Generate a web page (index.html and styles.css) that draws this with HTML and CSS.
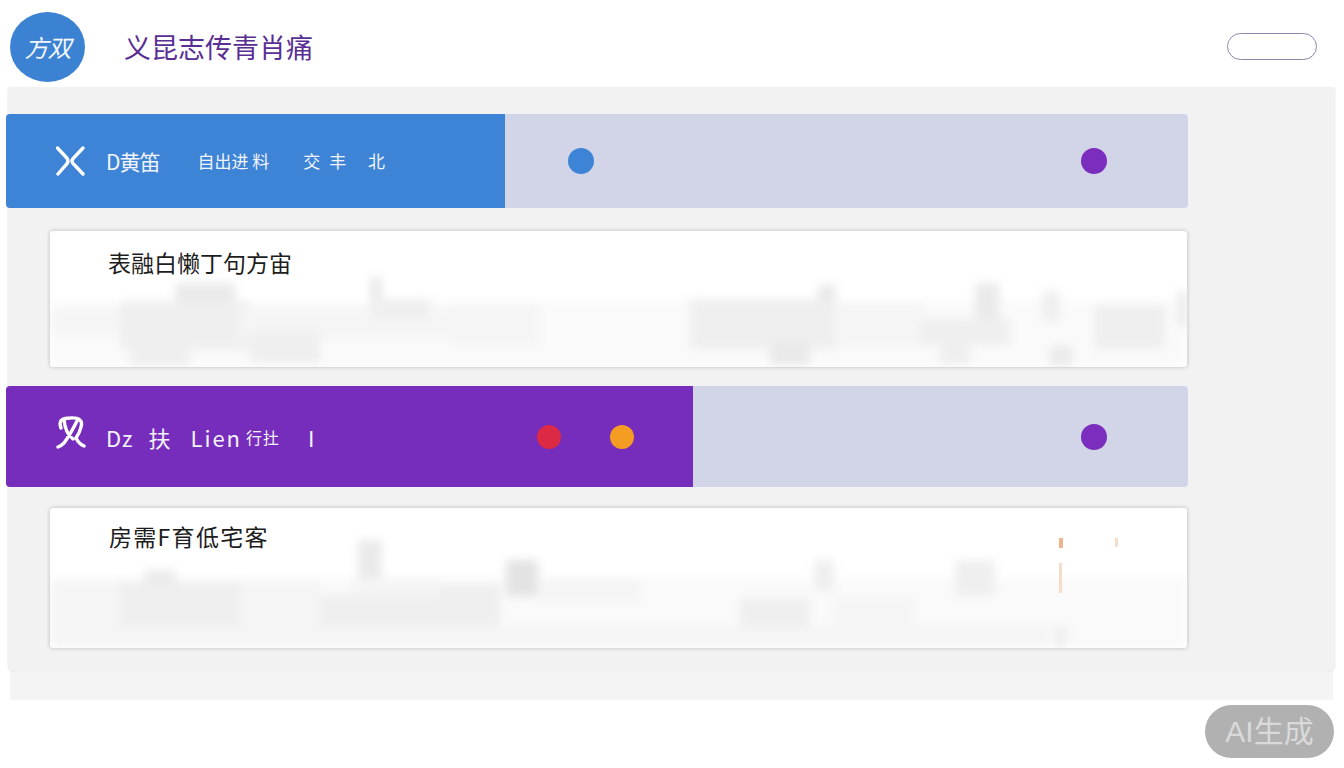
FILE: index.html
```html
<!DOCTYPE html>
<html lang="zh">
<head>
<meta charset="utf-8">
<title>义昆志传青肖痛</title>
<link rel="stylesheet" href="styles.css">
</head>
<body>
<header class="top">
  <div class="logo">方双</div>
  <h1 class="title">义昆志传青肖痛</h1>
  <button class="pill" type="button"></button>
</header>
<main class="panel">
  <section class="bar bar-blue">
    <div class="fill fill-blue">
      <svg class="bar-icon" viewBox="0 0 30 34"><path d="M1.5 4 L9 12 Q12 15 12 17 Q12 19 9 22 L2 30 M27 4 L19.5 12 Q16 15 16 17 Q16 19 19.5 22 L27 30"/></svg>
      <span class="bar-text"><span class="seg-a">D黄笛</span><span class="seg-b">自出进 料</span><span class="seg-c">交丰 北</span></span>
    </div>
    <div class="track">
      <span class="dot dot-blue"></span>
      <span class="dot dot-purple dot-end"></span>
    </div>
  </section>
  <article class="card card-one">
    <svg class="sky" viewBox="0 0 1137 136" preserveAspectRatio="none">
      <g class="blur">
        <rect class="s0" x="0" y="70" width="1137" height="66"/>
        <rect class="s1" x="0" y="78" width="70" height="26"/>
        <rect class="s2" x="70" y="70" width="130" height="48"/>
        <rect class="s2" x="80" y="118" width="60" height="18"/>
        <rect class="s3" x="125" y="52" width="60" height="18"/>
        <rect class="s1" x="190" y="78" width="210" height="30"/>
        <rect class="s2" x="200" y="100" width="70" height="32"/>
        <rect class="s3" x="320" y="46" width="12" height="34"/>
        <rect class="s2" x="320" y="68" width="60" height="20"/>
        <rect class="s1" x="400" y="74" width="90" height="40"/>
        <rect class="s2" x="640" y="68" width="145" height="50"/>
        <rect class="s3" x="720" y="110" width="40" height="24"/>
        <rect class="s3" x="768" y="54" width="18" height="18"/>
        <rect class="s1" x="785" y="72" width="90" height="44"/>
        <rect class="s3" x="925" y="52" width="24" height="36"/>
        <rect class="s2" x="992" y="60" width="18" height="30"/>
        <rect class="s2" x="870" y="88" width="90" height="26"/>
        <rect class="s2" x="890" y="110" width="30" height="24"/>
        <rect class="s2" x="1045" y="74" width="70" height="44"/>
        <rect class="s3" x="1000" y="115" width="22" height="20"/>
        <rect class="s3" x="1128" y="60" width="9" height="36"/>
      </g>
    </svg>
    <p class="card-text">表融白懒丁句方宙</p>
  </article>
  <section class="bar bar-purple">
    <div class="fill fill-purple">
      <svg class="bar-icon" viewBox="0 0 30 34"><path d="M5 13 Q1 3 14 3 Q28 2 25 12 Q24 17 20 23 Q23 29 28 31 M8 4 Q9 18 17 24 M21 6 Q14 20 8 28 Q5 31 2 32"/></svg>
      <span class="bar-text bar-text-wide"><span class="seg-dz">Dz</span><span class="seg-fu">扶</span><span class="seg-li">Lien</span><span class="seg-xi">行扗</span><span class="seg-i">I</span></span>
      <span class="dot dot-red"></span>
      <span class="dot dot-orange"></span>
    </div>
    <div class="track">
      <span class="dot dot-purple dot-end"></span>
    </div>
  </section>
  <article class="card card-two">
    <svg class="sky" viewBox="0 0 1137 140" preserveAspectRatio="none">
      <g class="blur">
        <rect class="s0" x="0" y="70" width="1137" height="70"/>
        <rect class="s1" x="0" y="72" width="270" height="46"/>
        <rect class="s2" x="70" y="74" width="120" height="44"/>
        <rect class="s3" x="95" y="62" width="30" height="14"/>
        <rect class="s2" x="270" y="86" width="120" height="32"/>
        <rect class="s3" x="308" y="32" width="24" height="42"/>
        <rect class="s1" x="300" y="70" width="90" height="18"/>
        <rect class="s4" x="456" y="52" width="32" height="36"/>
        <rect class="s2" x="390" y="76" width="60" height="50"/>
        <rect class="s1" x="490" y="70" width="100" height="24"/>
        <rect class="s2" x="764" y="52" width="20" height="30"/>
        <rect class="s2" x="905" y="52" width="40" height="36"/>
        <rect class="s1" x="785" y="90" width="80" height="30"/>
        <rect class="s1" x="0" y="118" width="1000" height="22"/>
        <rect class="s2" x="690" y="90" width="70" height="30"/>
        <rect class="s2" x="1005" y="118" width="12" height="22"/>
      </g>
      <rect class="o1" x="1009" y="30" width="4" height="10"/>
      <rect class="o2" x="1065" y="30" width="3" height="9"/>
      <rect class="o2" x="1009" y="55" width="3" height="30"/>
    </svg>
    <p class="card-text card-text-two">房需F育低宅客</p>
  </article>
</main>
<div class="strip"></div>
<div class="badge">AI生成</div>
</body>
</html>
```
FILE: styles.css
```css
* { box-sizing: border-box; }
html, body { margin: 0; padding: 0; }
body {
  width: 1344px;
  height: 768px;
  overflow: hidden;
  background: #fff;
  font-family: "Noto Sans CJK SC", "Noto Sans", sans-serif;
  position: relative;
}
.top {
  height: 87px;
  display: flex;
  align-items: center;
  padding: 6px 27px 0 10px;
}
.logo {
  width: 75px;
  height: 70px;
  border-radius: 50%;
  background: #3b82d3;
  color: #f2f6fb;
  font-size: 24px;
  font-style: italic;
  letter-spacing: -1px;
  display: flex;
  align-items: center;
  justify-content: center;
}
.title {
  margin: 0 0 0 39px;
  font-size: 27px;
  line-height: 36px;
  font-weight: 400;
  color: #5a2f93;
}
.pill {
  margin: 0 0 0 auto;
  width: 90px;
  height: 27px;
  padding: 0;
  background: #fff;
  border: 1px solid #8a88ad;
  border-radius: 14px;
}
.panel {
  margin: 0 9px 0 8px;
  height: 585px;
  padding-top: 27px;
  background: #f2f2f3;
  border-radius: 2px 2px 8px 8px;
  box-shadow: 0 1px 2px rgba(0, 0, 0, .14);
}
.bar {
  margin-left: -2px;
  width: 1182px;
  display: flex;
  border-radius: 4px;
  overflow: hidden;
}
.bar-blue { height: 94px; }
.bar-purple { height: 101px; }
.fill {
  display: flex;
  align-items: center;
  padding-left: 50px;
  color: #f3f4fb;
}
.fill-blue { width: 499px; background: #3e84d6; }
.fill-purple { width: 687px; background: #772dbb; }
.bar-icon {
  width: 30px;
  height: 34px;
  flex: none;
  fill: none;
  stroke: #fff;
  stroke-width: 3.4;
  stroke-linecap: round;
}
.fill-purple .bar-icon { margin-top: -10px; }
.bar-text {
  display: flex;
  margin-left: 20px;
  font-size: 20px;
  line-height: 28px;
  white-space: nowrap;
}
.seg-a { font-size: 21px; letter-spacing: -1px; }
.seg-b { margin-left: 38px; font-size: 17px; }
.seg-c { margin-left: 34px; font-size: 17px; letter-spacing: 9px; }
.bar-text-wide { width: 224px; font-size: 22px; letter-spacing: 1px; }
.seg-fu { margin-left: 15px; }
.seg-li { margin-left: 19px; letter-spacing: 2px; }
.seg-xi { margin-left: 4px; font-size: 16px; align-self: center; }
.seg-i { margin-left: 28px; }
.track {
  flex: 1;
  display: flex;
  align-items: center;
  padding: 0 81px 0 63px;
  background: #d2d4e8;
}
.dot {
  width: 26px;
  height: 26px;
  border-radius: 50%;
  flex: none;
}
.dot-blue { background: #3e84d6; }
.dot-purple { background: #7b2dbd; }
.dot-end { margin-left: auto; }
.dot-red {
  width: 24px;
  height: 24px;
  margin: 1px 0 0 207px;
  background: #dc2a44;
}
.dot-orange {
  width: 24px;
  height: 24px;
  margin: 1px 0 0 49px;
  background: #f59c22;
}
.card {
  position: relative;
  width: 1137px;
  margin-left: 42px;
  background: #fff;
  border-radius: 3px;
  box-shadow: 0 0 4px rgba(0, 0, 0, .24);
  overflow: hidden;
}
.card-one { height: 136px; margin-top: 23px; margin-bottom: 19px; }
.card-two { height: 140px; margin-top: 21px; }
.sky {
  position: absolute;
  left: 0;
  top: 0;
  width: 100%;
  height: 100%;
}
.blur { filter: blur(5px); }
.s0 { fill: #fafafa; }
.s1 { fill: #f5f5f5; }
.s2 { fill: #efefef; }
.s3 { fill: #eaeaea; }
.s4 { fill: #e3e3e3; }
.o1 { fill: #eeb48c; }
.o2 { fill: #f6dccb; }
.card-text {
  position: relative;
  margin: 0;
  padding: 14px 0 0 58px;
  font-size: 23px;
  line-height: 34px;
  color: #1d1d1d;
}
.card-text-two {
  padding: 11px 0 0 59px;
  letter-spacing: 1.3px;
}
.strip {
  margin: 0 11px 0 10px;
  height: 28px;
  background: #f4f4f4;
}
.badge {
  position: absolute;
  left: 1205px;
  top: 705px;
  width: 129px;
  height: 53px;
  border-radius: 27px;
  background: #b1b1b1;
  color: #dadada;
  font-family: "Liberation Sans", "Noto Sans CJK SC", sans-serif;
  font-size: 30px;
  line-height: 53px;
  text-align: center;
}
```
